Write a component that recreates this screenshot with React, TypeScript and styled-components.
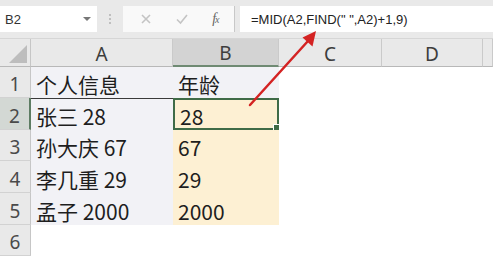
import React from "react";
import styled, { createGlobalStyle } from "styled-components";

const Global = createGlobalStyle`
  html, body { margin: 0; padding: 0; background: #ffffff; overflow: hidden; }
  body { font-family: "Noto Sans", "Noto Sans CJK SC", sans-serif; }
`;

const Page = styled.div`
  position: relative;
  width: 493px;
  height: 256px;
  overflow: hidden;
  display: flex;
  flex-direction: column;
  background: #ffffff;
`;

const FormulaBar = styled.div`
  display: flex;
  align-items: center;
  height: 41px;
  padding: 0;
  background: #e9e9e9;
  box-sizing: border-box;
  border-bottom: 1px solid #d6d6d6;
`;

const NameBox = styled.div`
  width: 97px;
  height: 26px;
  background: #ffffff;
  box-sizing: border-box;
  display: flex;
  align-items: center;
  justify-content: space-between;
  padding: 0 6px 0 5px;
  font-family: "Liberation Sans", Arial, sans-serif;
  font-size: 13px;
  color: #333;
`;

const Caret = styled.span`
  width: 0;
  height: 0;
  border-left: 4px solid transparent;
  border-right: 4px solid transparent;
  border-top: 4px solid #777;
`;

const Dots = styled.div`
  width: 26px;
  display: flex;
  flex-direction: column;
  align-items: center;
  gap: 2px;
  span {
    width: 2px;
    height: 2px;
    background: #b0b0b0;
    border-radius: 1px;
  }
`;

const Buttons = styled.div`
  width: 112px;
  height: 26px;
  background: #f9f9f9;
  border-right: 1px solid #c8c8c8;
  box-sizing: border-box;
  display: flex;
  align-items: center;
  justify-content: space-around;
  padding: 0 4px 0 6px;
`;

const Fx = styled.span`
  font-family: "Liberation Serif", "Times New Roman", serif;
  font-style: italic;
  font-size: 14px;
  color: #666;
  letter-spacing: -1px;
  sub { font-size: 10px; vertical-align: baseline; }
`;

const FormulaInput = styled.div`
  flex: 1;
  margin-left: 5px;
  height: 26px;
  background: #ffffff;
  display: flex;
  align-items: center;
  padding-left: 11px;
  font-family: "Liberation Sans", Arial, sans-serif;
  font-size: 13px;
  color: #222;
  white-space: pre;
`;

const Grid = styled.div`
  display: grid;
  grid-template-columns: 31px 142px 106px 103px 101px 1fr;
  grid-template-rows: 28px 31px 32px 31px 32px 32px 31px;
`;

const Corner = styled.div`
  background: #e9e9e9;
  border-right: 1px solid #c6c6c6;
  border-bottom: 1px solid #b8b8b8;
  position: relative;
  &::after {
    content: "";
    position: absolute;
    right: 3px;
    bottom: 3px;
    width: 0;
    height: 0;
    border-left: 18px solid transparent;
    border-bottom: 18px solid #bdbdbd;
  }
`;

const ColHead = styled.div<{ $active?: boolean }>`
  background: ${(p) => (p.$active ? "#d3d3d3" : "#e9e9e9")};
  border-right: 1px solid #cacaca;
  border-bottom: ${(p) => (p.$active ? "2px solid #6f8a73" : "1px solid #b8b8b8")};
  box-sizing: border-box;
  display: flex;
  align-items: center;
  justify-content: center;
  font-family: "Noto Sans", sans-serif;
  font-size: 19px;
  color: #3d3d3d;
  padding-top: 2px;
`;

const RowHead = styled.div<{ $active?: boolean }>`
  background: ${(p) => (p.$active ? "#d3d8d4" : "#e9e9e9")};
  border-right: ${(p) => (p.$active ? "2px solid #5d7c63" : "1px solid #c6c6c6")};
  border-bottom: 1px solid #d2d2d2;
  box-sizing: border-box;
  display: flex;
  align-items: center;
  justify-content: center;
  font-family: "Noto Sans", sans-serif;
  font-size: 19px;
  color: #4a4a4a;
  padding-top: 4px;
`;

const Cell = styled.div<{ $tone?: "a" | "b" | "none"; $topLine?: boolean }>`
  background: ${(p) =>
    p.$tone === "a" ? "#f2f2f6" : p.$tone === "b" ? "#fdf0d3" : "#ffffff"};
  ${(p) => (p.$topLine ? "border-top: 1px solid #3a3a3a;" : "")}
  box-sizing: border-box;
  display: flex;
  align-items: center;
  padding: 3px 0 0 5px;
  font-family: "Noto Sans CJK SC", "Noto Sans", sans-serif;
  font-size: 21px;
  color: #1e1e1e;
  white-space: nowrap;
  position: relative;
`;

const Selected = styled(Cell)`
  border: 2px solid #3f6b47;
  padding-left: 5px;
  &::after {
    content: "";
    position: absolute;
    right: -4px;
    bottom: -4px;
    width: 6px;
    height: 6px;
    background: #3f6b47;
    border: 1px solid #ffffff;
  }
`;

const Arrow = styled.svg`
  position: absolute;
  left: 0;
  top: 0;
  pointer-events: none;
`;

const rows: [string, string][] = [
  ["个人信息", "年龄"],
  ["张三 28", "28"],
  ["孙大庆 67", "67"],
  ["李几重 29", "29"],
  ["孟子 2000", "2000"],
];

export default function App() {
  return (
    <Page>
      <Global />
      <FormulaBar>
        <NameBox>
          B2
          <Caret />
        </NameBox>
        <Dots>
          <span />
          <span />
          <span />
        </Dots>
        <Buttons>
          <svg width="12" height="12" viewBox="0 0 12 12">
            <path d="M2 2 L10 10 M10 2 L2 10" stroke="#c4c4c4" strokeWidth="1.6" fill="none" />
          </svg>
          <svg width="14" height="12" viewBox="0 0 14 12">
            <path d="M2 6.5 L5.5 10 L12 2" stroke="#c4c4c4" strokeWidth="1.6" fill="none" />
          </svg>
          <Fx>
            f<sub>x</sub>
          </Fx>
        </Buttons>
        <FormulaInput>=MID(A2,FIND(" ",A2)+1,9)</FormulaInput>
      </FormulaBar>
      <Grid>
        <Corner />
        <ColHead>A</ColHead>
        <ColHead $active>B</ColHead>
        <ColHead>C</ColHead>
        <ColHead>D</ColHead>
        <ColHead />
        {rows.map(([a, b], i) => (
          <React.Fragment key={i}>
            <RowHead $active={i === 1}>{i + 1}</RowHead>
            <Cell $tone="a" $topLine={i === 1}>{a}</Cell>
            {i === 1 ? (
              <Selected $tone="b">{b}</Selected>
            ) : (
              <Cell $tone={i === 0 ? "a" : "b"}>{b}</Cell>
            )}
            <Cell $tone="none" />
            <Cell $tone="none" />
            <Cell $tone="none" />
          </React.Fragment>
        ))}
        <RowHead>6</RowHead>
        <Cell $tone="none" />
        <Cell $tone="none" />
        <Cell $tone="none" />
        <Cell $tone="none" />
        <Cell $tone="none" />
      </Grid>
      <Arrow width="493" height="256" viewBox="0 0 493 256">
        <line x1="250" y1="105" x2="308" y2="41" stroke="#d42323" strokeWidth="2.5" strokeLinecap="round" />
        <polygon points="316,31 312.5,46.5 302.5,37.5" fill="#d42323" />
      </Arrow>
    </Page>
  );
}
